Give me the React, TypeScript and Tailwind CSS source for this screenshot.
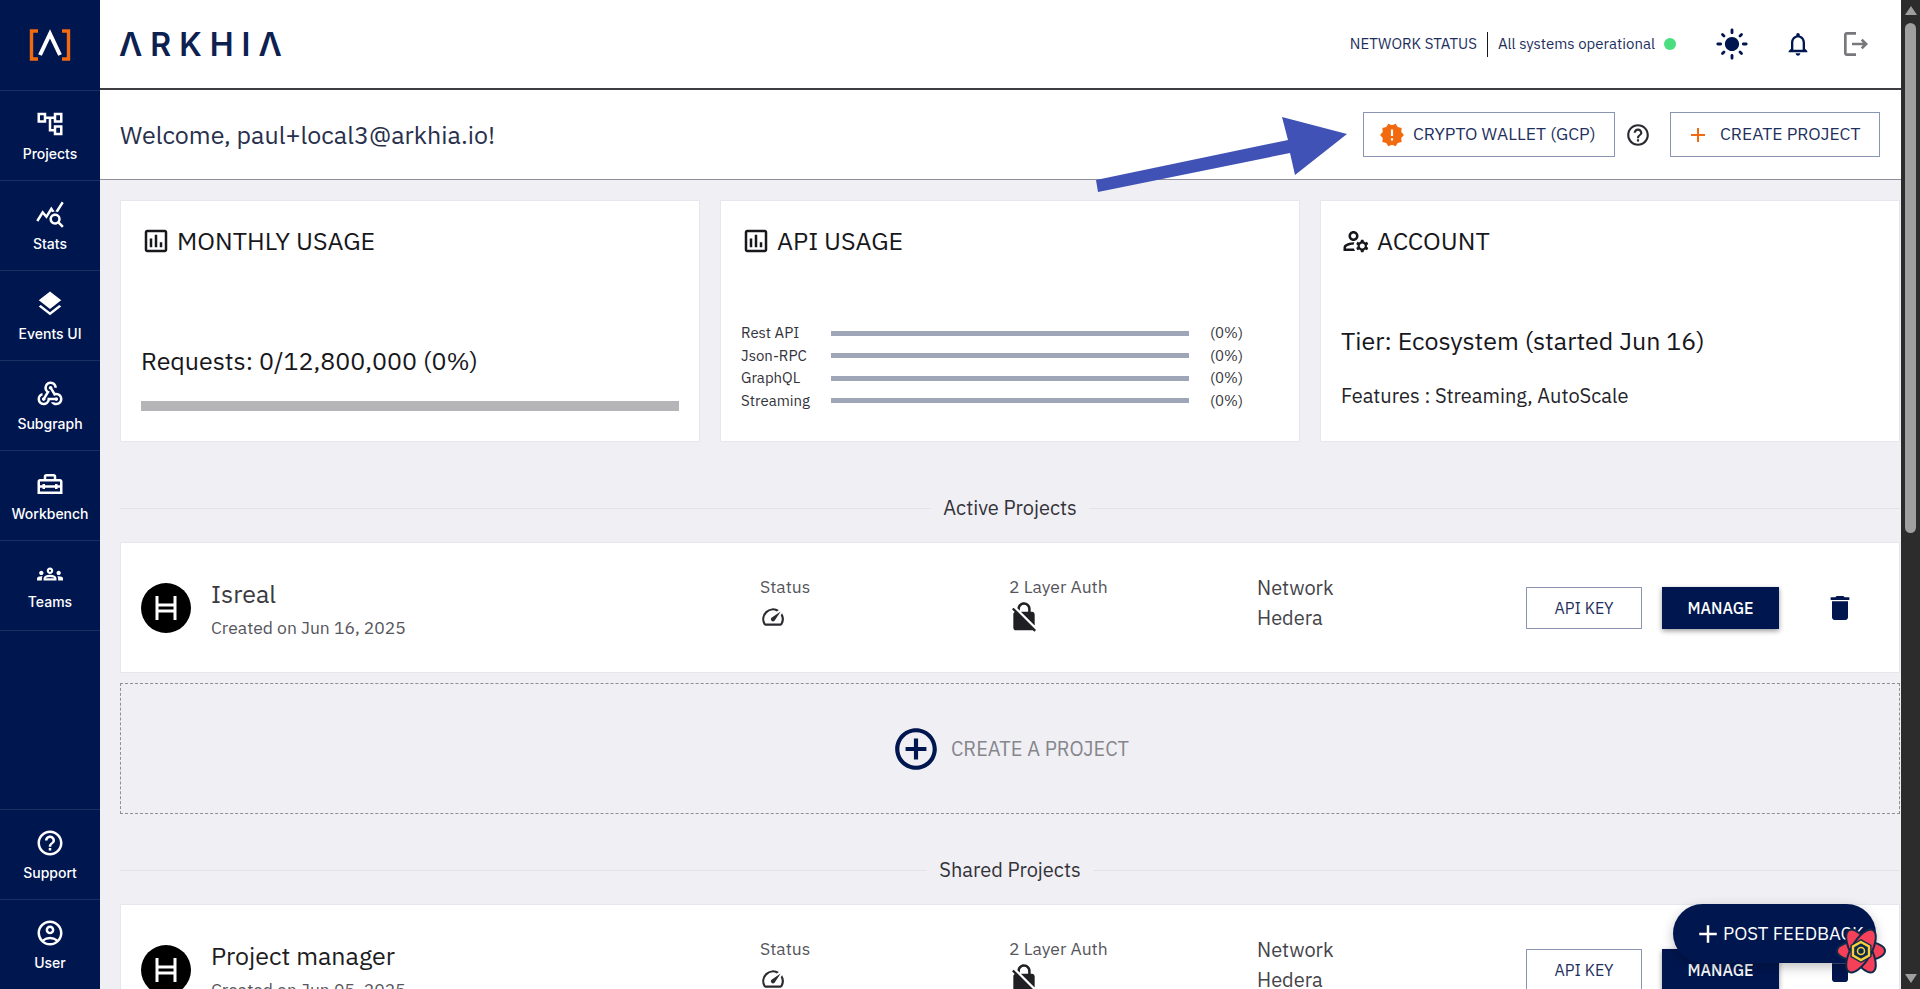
import React from 'react'
import {
  MdOutlineAccountTree,
  MdOutlineQueryStats,
  MdLayers,
  MdOutlineWebhook,
  MdOutlineHomeRepairService,
  MdOutlineGroups,
  MdHelpOutline,
  MdOutlineAccountCircle,
  MdOutlineAssessment,
  MdOutlineManageAccounts,
  MdOutlineSpeed,
  MdNoEncryption,
  MdDelete,
  MdLightMode,
  MdOutlineNotifications,
  MdOutlineLogout,
  MdNewReleases,
  MdAdd,
  MdAddCircleOutline,
} from 'react-icons/md'

const font = "font-['IBM_Plex_Sans','Roboto','Liberation_Sans',sans-serif]"

const navTop = [
  { label: 'Projects', icon: MdOutlineAccountTree, size: 30 },
  { label: 'Stats', icon: MdOutlineQueryStats, size: 30 },
  { label: 'Events UI', icon: MdLayers, size: 30 },
  { label: 'Subgraph', icon: MdOutlineWebhook, size: 30 },
  { label: 'Workbench', icon: MdOutlineHomeRepairService, size: 30 },
  { label: 'Teams', icon: MdOutlineGroups, size: 26 },
]

const navBottom = [
  { label: 'Support', icon: MdHelpOutline, size: 30 },
  { label: 'User', icon: MdOutlineAccountCircle, size: 30 },
]

const apiRows = ['Rest API', 'Json-RPC', 'GraphQL', 'Streaming']

const NavItem = ({ label, icon: Icon, size }: any) => (
  <div className="flex h-[90px] flex-col items-center justify-center gap-[6px] border-b border-[#1c2f63] text-white">
    <Icon size={size} />
    <span className="font-['Inter',sans-serif] text-[14px] font-medium leading-[17px]">{label}</span>
  </div>
)

const HederaAvatar = () => (
  <div className="flex h-[50px] w-[50px] shrink-0 items-center justify-center rounded-full bg-black">
    <svg width="22" height="24" viewBox="0 0 22 24" fill="none" stroke="#fff" strokeWidth="3">
      <path d="M2 0v24M20 0v24M2 9h18M2 15h18" />
    </svg>
  </div>
)

const Divider = ({ label }: any) => (
  <div className="flex items-center gap-[12px]">
    <div className="h-px flex-1 bg-[#e2e2ea]" />
    <span className="text-[20px] leading-[24px] text-[#33333a]">{label}</span>
    <div className="h-px flex-1 bg-[#e2e2ea]" />
  </div>
)

const ProjectCard = ({ name, created, dark }: any) => (
  <div className="flex h-[131px] shrink-0 items-center border border-[#e6e6ee] bg-white pl-[20px]">
    <HederaAvatar />
    <div className="ml-[20px] w-[549px] pt-[3px]">
      <div className={`text-[25px] leading-[30px] ${dark ? 'text-[#1d1d22]' : 'text-[#3a3a40]'}`}>{name}</div>
      <div className="mt-[7px] text-[17.5px] leading-[24px] text-[#55555c]">{created}</div>
    </div>
    <div className="mb-[10px] w-[249px] text-[#55555c]">
      <div className="text-[17.5px] leading-[24px]">Status</div>
      <MdOutlineSpeed size={26} className="mt-[5px] text-[#2a2a30]" />
    </div>
    <div className="mb-[8px] w-[248px] text-[#55555c]">
      <div className="text-[17.5px] leading-[24px]">2 Layer Auth</div>
      <MdNoEncryption size={32} className="-ml-[1px] mt-[2px] text-[#1f1f24]" />
    </div>
    <div className="mb-[9px] w-[269px] text-[20px] leading-[30px] text-[#44444a]">
      <div>Network</div>
      <div>Hedera</div>
    </div>
    <button className="h-[42px] w-[116px] border border-[#8a95b3] text-[16px] text-[#1e2f60]">API KEY</button>
    <button className="ml-[20px] h-[42px] w-[117px] bg-[#00164f] text-[16px] font-medium text-white shadow-[0_2px_5px_rgba(0,0,0,0.4)]">
      MANAGE
    </button>
    <MdDelete size={32} className="ml-[45px] text-[#00164f]" />
  </div>
)

const CardTitle = ({ icon: Icon, children }: any) => (
  <div className="mt-[1px] flex items-center gap-[6px] text-[25px] leading-[30px] text-[#17171c]">
    <Icon size={30} />
    <span>{children}</span>
  </div>
)

export default function App() {
  return (
    <div className={`relative flex h-screen w-screen overflow-hidden bg-[#f0eff4] ${font}`}>
      {/* sidebar */}
      <aside className="flex h-full w-[100px] shrink-0 flex-col overflow-hidden bg-[#00164f]">
        <div className="flex h-[91px] shrink-0 items-center justify-center border-b border-[#1c2f63]">
          <svg width="42" height="32" viewBox="0 0 42 32" fill="none">
            <path d="M9 2H2.5v28H9M33 2h6.5v28H33" stroke="#f26a0f" strokeWidth="3.4" />
            <path d="M11 26L21 5l10 21" stroke="#fff" strokeWidth="4" />
          </svg>
        </div>
        {navTop.map((n) => (
          <NavItem key={n.label} {...n} />
        ))}
        <div className="flex-1 border-b border-[#1c2f63]" />
        <div className="-mb-[1px]">
          {navBottom.map((n) => (
            <NavItem key={n.label} {...n} />
          ))}
        </div>
      </aside>

      {/* main column */}
      <div className="flex min-w-0 flex-1 flex-col overflow-hidden">
        <header className="flex h-[90px] shrink-0 items-center border-b-2 border-[#3d3d42] bg-white pl-[19px] pr-[29px] shadow-[0_2px_4px_rgba(0,0,0,0.15)]">
          <div className="mt-[2px] font-['Inter',sans-serif] text-[32px] font-semibold leading-none tracking-[8px] text-[#0d2150]">ΛRKHIΛ</div>
          <div className="ml-auto flex items-center text-[15px] text-[#1e2f60]">
            <span>NETWORK STATUS</span>
            <div className="mx-[10px] h-[25px] w-px bg-[#17171c]" />
            <span>All systems operational</span>
            <div className="ml-[9px] h-[12px] w-[12px] rounded-full bg-[#4ade80]" />
            <MdLightMode size={34} className="ml-[39px] text-[#00164f]" />
            <MdOutlineNotifications size={28} className="ml-[35px] text-[#00164f]" />
            <MdOutlineLogout size={32} className="ml-[28px] text-[#77777c]" />
          </div>
        </header>

        <div className="flex h-[90px] shrink-0 items-center justify-between border-b border-[#8f8f9c] bg-white pl-[20px] pr-[21px]">
          <div className="text-[25px] text-[#28304d]">Welcome, paul+local3@arkhia.io!</div>
          <div className="flex items-center">
            <button className="flex h-[45px] w-[252px] items-center border border-[#8a95b3] pl-[15px] text-[17.5px] text-[#1e2f60]">
              <MdNewReleases size={26} className="mr-[8px] text-[#f26a0f]" />
              CRYPTO WALLET (GCP)
            </button>
            <MdHelpOutline size={26} className="mx-[10px] text-[#2a2a30]" />
            <button className="ml-[9px] flex h-[45px] w-[210px] items-center border border-[#8a95b3] pl-[15px] text-[17.5px] text-[#1e2f60]">
              <MdAdd size={24} className="mr-[10px] text-[#f26a0f]" />
              CREATE PROJECT
            </button>
          </div>
        </div>

        <main className="flex min-h-0 flex-1 flex-col overflow-hidden pb-0 pl-[20px] pr-[1px] pt-[20px]">
          <div className="grid h-[242px] shrink-0 grid-cols-3 gap-[20px]">
            <div className="flex flex-col border border-[#e6e6ee] bg-white px-[20px] pt-[24px]">
              <CardTitle icon={MdOutlineAssessment}>MONTHLY USAGE</CardTitle>
              <div className="mt-[89px] text-[25px] leading-[32px] text-[#17171c]">Requests: 0/12,800,000 (0%)</div>
              <div className="mt-[24px] h-[10px] bg-[#b5b5b8]" />
            </div>
            <div className="flex flex-col border border-[#e6e6ee] bg-white px-[20px] pt-[24px]">
              <CardTitle icon={MdOutlineAssessment}>API USAGE</CardTitle>
              <div className="mt-[68px] flex flex-col gap-[4.5px]">
                {apiRows.map((r) => (
                  <div key={r} className="flex h-[18px] items-center text-[15px] leading-[18px] text-[#33333a]">
                    <span className="w-[90px] shrink-0">{r}</span>
                    <div className="h-[5px] w-[358px] bg-[#9ea6b8]" />
                    <span className="ml-[21px]">(0%)</span>
                  </div>
                ))}
              </div>
            </div>
            <div className="flex flex-col border border-[#e6e6ee] bg-white px-[20px] pt-[24px]">
              <CardTitle icon={MdOutlineManageAccounts}>ACCOUNT</CardTitle>
              <div className="mt-[69px] text-[25px] leading-[32px] text-[#17171c]">Tier: Ecosystem (started Jun 16)</div>
              <div className="mt-[26px] text-[20px] leading-[26px] text-[#24242a]">Features : Streaming, AutoScale</div>
            </div>
          </div>

          <div className="mt-[54px] shrink-0">
            <Divider label="Active Projects" />
          </div>
          <div className="mt-[22px] shrink-0">
            <ProjectCard name="Isreal" created="Created on Jun 16, 2025" />
          </div>

          <div className="mt-[10px] flex h-[131px] shrink-0 items-center justify-center border border-dashed border-[#8f8f95]">
            <MdAddCircleOutline size={50} className="text-[#00164f]" />
            <span className="ml-[10px] text-[20px] text-[#85858c]">CREATE A PROJECT</span>
          </div>

          <div className="mt-[44px] shrink-0">
            <Divider label="Shared Projects" />
          </div>
          <div className="mt-[22px] shrink-0">
            <ProjectCard name="Project manager" created="Created on Jun 05, 2025" dark />
          </div>
        </main>
      </div>

      {/* browser scrollbar */}
      <div className="relative flex h-full w-[19px] shrink-0 flex-col items-center bg-[#2c2c2c]">
        <div className="mt-[6px] h-0 w-0 border-x-[6px] border-b-[9px] border-x-transparent border-b-[#9f9f9f]" />
        <div className="mt-[8px] h-[510px] w-[11px] rounded-t-full rounded-b-full bg-[#9f9f9f]" />
        <div className="absolute bottom-[6px] h-0 w-0 border-x-[6px] border-t-[9px] border-x-transparent border-t-[#9f9f9f]" />
      </div>

      {/* annotation arrow drawn over the page */}
      <svg className="absolute left-[1090px] top-[110px]" width="265" height="85" viewBox="0 0 265 85">
        <path d="M6 70L198 30L192 7L257 24L205 65L200 43L8 82Z" fill="#4052b5" />
      </svg>

      {/* floating feedback button */}
      <button className="absolute left-[1673px] top-[904px] flex h-[59px] w-[203px] items-center rounded-full bg-[#00164f] pl-[20px] text-[18.5px] text-white shadow-[0_4px_12px_rgba(0,0,0,0.25)]">
        <MdAdd size={30} />
        POST FEEDBACK
      </button>

      {/* devtools badge */}
      <svg className="absolute left-[1836px] top-[926px]" width="50" height="50" viewBox="0 0 50 50">
        <g fill="#f5405a" stroke="#0c2a4a" strokeWidth="2">
          <ellipse cx="25" cy="25" rx="24" ry="10" />
          <ellipse cx="25" cy="25" rx="24" ry="10" transform="rotate(60 25 25)" />
          <ellipse cx="25" cy="25" rx="24" ry="10" transform="rotate(120 25 25)" />
        </g>
        <path d="M25 13l10.5 6v12L25 37l-10.5-6V19z" fill="#0c2a4a" />
        <path d="M25 16l8 4.5v9L25 34l-8-4.5v-9z" fill="none" stroke="#f6cf3a" strokeWidth="2.4" />
        <circle cx="25" cy="25" r="3.5" fill="none" stroke="#f6cf3a" strokeWidth="1.6" />
      </svg>
    </div>
  )
}
